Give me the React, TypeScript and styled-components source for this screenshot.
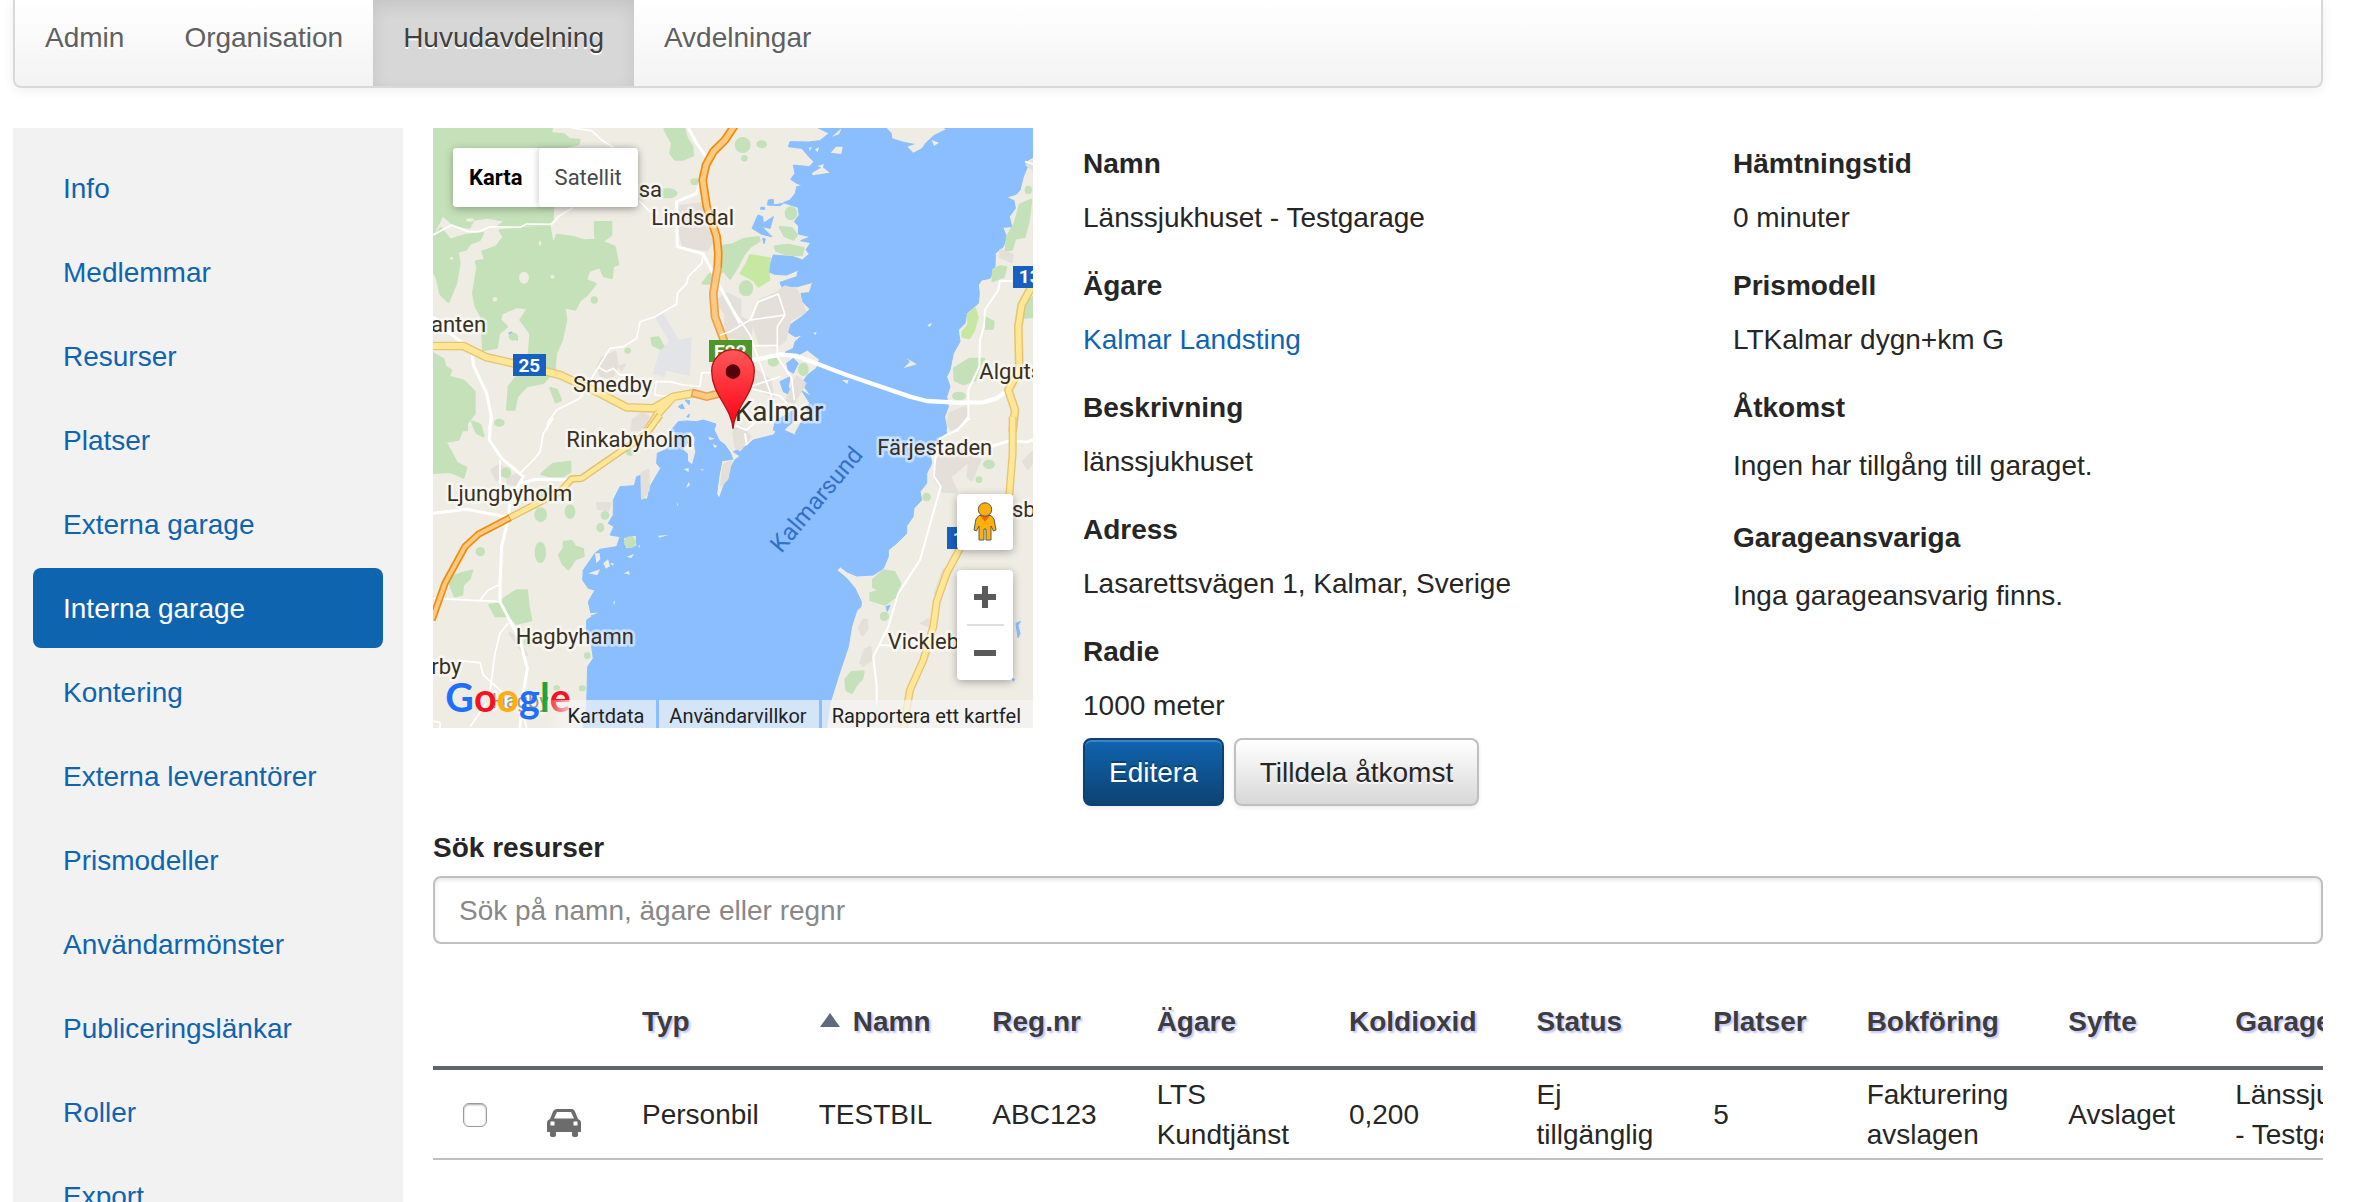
import React from 'react';
import styled, { createGlobalStyle } from 'styled-components';

const GlobalStyle = createGlobalStyle`
  *, *::before, *::after { box-sizing: border-box; }
  body {
    margin: 0;
    background: #fff;
    color: #262626;
    font-family: "Helvetica Neue", Helvetica, "Liberation Sans", Arial, sans-serif;
    font-size: 28px;
    line-height: 40px;
  }
`;

const Page = styled.div`
  height: 100vh;
  overflow: hidden;
  padding: 0 43px 0 13px;
`;

/* ---------- top navigation ---------- */

const NavBar = styled.nav`
  display: flex;
  border: 2px solid #d9d9d9;
  border-top: 0;
  border-radius: 0 0 8px 8px;
  background: linear-gradient(#fff, #f3f3f3);
  box-shadow: 0 2px 12px rgba(0, 0, 0, 0.07);
`;

const NavItem = styled.a<{ $active?: boolean }>`
  padding: 18px 30px 28px;
  color: ${p => (p.$active ? '#404040' : '#606060')};
  background: ${p => (p.$active ? '#d7d7d7' : 'transparent')};
  box-shadow: ${p => (p.$active ? 'inset 0 6px 16px rgba(0, 0, 0, 0.09)' : 'none')};
  text-decoration: none;
  text-shadow: 0 2px 0 #fff;
`;

/* ---------- body ---------- */

const Body = styled.div`
  display: flex;
  align-items: flex-start;
  gap: 30px;
  margin-top: 40px;
`;

const Sidebar = styled.nav`
  flex: 0 0 390px;
  display: flex;
  flex-direction: column;
  gap: 4px;
  padding: 20px;
  background: #f2f2f2;
`;

const SideLink = styled.a<{ $active?: boolean }>`
  padding: 21px 30px 19px;
  border-radius: 8px;
  color: ${p => (p.$active ? '#fff' : '#0f64b0')};
  background: ${p => (p.$active ? '#0f64b0' : 'transparent')};
  text-decoration: none;
`;

const Main = styled.main`
  flex: 1;
  min-width: 0;
`;

const Overview = styled.section`
  display: grid;
  grid-template-columns: repeat(3, minmax(0, 1fr));
  column-gap: 60px;
`;

const Details = styled.div`
  padding-top: 16px;
`;

const Facts = styled.dl`
  margin: 0;
  dt { font-weight: bold; margin-bottom: 14px; }
  dd { margin: 0 0 28px; }
  dd:last-child { margin-bottom: 12px; }
`;

const Note = styled.p`
  margin: 0;
  padding: 4px 0;
`;

const Link = styled.a`
  color: #0f64b0;
  text-decoration: none;
`;

const Actions = styled.div`
  display: flex;
  gap: 10px;
`;

const Button = styled.button<{ $primary?: boolean }>`
  padding: 13px 24px 11px;
  border: 2px solid ${p => (p.$primary ? '#0c4273' : '#bfbfbf')};
  border-radius: 8px;
  font: inherit;
  color: ${p => (p.$primary ? '#fff' : '#262626')};
  background: ${p => (p.$primary ? 'linear-gradient(#0f64b0, #0d4373)' : 'linear-gradient(#fff, #d8d8d8)')};
  text-shadow: ${p => (p.$primary ? '0 -2px 0 rgba(0, 0, 0, 0.25)' : '0 2px 0 rgba(255, 255, 255, 0.75)')};
  box-shadow: inset 0 2px 0 rgba(255, 255, 255, 0.2), 0 2px 4px rgba(0, 0, 0, 0.08);
`;

/* ---------- search ---------- */

const SearchLabel = styled.label`
  display: block;
  margin: 22px 0 8px;
  font-weight: bold;
`;

const SearchInput = styled.input`
  display: block;
  width: 100%;
  height: 68px;
  padding: 2px 24px 0;
  border: 2px solid #c0c0c0;
  border-radius: 8px;
  font: inherit;
  color: #262626;
  background: #fff;
  box-shadow: inset 0 2px 4px rgba(0, 0, 0, 0.1);
  &::placeholder { color: #888; opacity: 1; }
`;

/* ---------- table ---------- */

const TableWrap = styled.div`
  margin-top: 32px;
  overflow: hidden;
`;

const Table = styled.table`
  width: 100%;
  border-collapse: collapse;
  text-align: left;
`;

const HeadCell = styled.th`
  padding: 26px 30px 24px;
  border-bottom: 4px solid #5f636b;
  color: #3d3d3d;
  text-shadow: 2px 2px 2px #c4c4ff;
`;

const Cell = styled.td`
  padding: 5px 30px 3px;
  border-bottom: 2px solid #c0c0c0;
  vertical-align: middle;
`;

const SortHeading = styled.span`
  display: flex;
  align-items: center;
  gap: 12px;
`;

const SortArrow = styled.svg`
  flex: none;
  width: 22px;
  height: 16px;
  margin-bottom: 4px;
`;

const Tick = styled.input`
  appearance: none;
  display: block;
  width: 24px;
  height: 24px;
  margin: 0;
  border: 1px solid #9a9a9a;
  border-radius: 6px;
  background: #fff;
  box-shadow: inset 0 1px 2px rgba(0, 0, 0, 0.35);
`;

const CarPicture = styled.svg`
  display: block;
  width: 35px;
  height: 28px;
  margin-top: 15px;
`;

/* ---------- map ---------- */

const MapBox = styled.div`
  position: relative;
  width: 600px;
  height: 600px;
  overflow: hidden;
  background: #eeece3;
  font-family: Roboto, sans-serif;
`;

const MapDrawing = styled.svg`
  display: block;
  width: 100%;
  height: 100%;
`;

const Water = styled.path`fill: #8abeff; stroke: #8abeff; stroke-width: 3; stroke-linejoin: round;`;
const Ground = styled.path`fill: #eeece3;`;
const Wood = styled.path`fill: #c5e1b9; stroke: #c5e1b9; stroke-width: 8; stroke-linejoin: round;`;
const Park = styled.path`fill: #c7e8a2; stroke: #c7e8a2; stroke-width: 6; stroke-linejoin: round;`;
const Town = styled.path`fill: #e4dfd8; stroke: #e4dfd8; stroke-width: 8; stroke-linejoin: round;`;
const Airfield = styled.path`fill: #e3e4e7;`;
const Road = styled.path<{ $w?: number; $c?: string }>`
  fill: none;
  stroke: ${p => p.$c ?? '#fff'};
  stroke-width: ${p => p.$w ?? 5};
  stroke-linejoin: round;
  stroke-linecap: butt;
`;
const PlaceName = styled.text<{ $size?: number; $c?: string; $halo?: string }>`
  font-family: Roboto, sans-serif;
  font-size: ${p => p.$size ?? 66}px;
  fill: ${p => p.$c ?? '#382f1f'};
  stroke: ${p => p.$halo ?? 'rgba(255, 255, 255, 0.5)'};
  stroke-width: 16;
  stroke-linejoin: round;
  paint-order: stroke;
`;
const ShieldText = styled.text`
  font-family: Roboto, sans-serif;
  font-size: 57px;
  font-weight: 700;
  fill: #fff;
  text-anchor: middle;
`;
const LogoText = styled.text`
  font-family: Lato, sans-serif;
  font-size: 118px;
  font-weight: 700;
`;

const MapTypes = styled.div`
  position: absolute;
  left: 20px;
  top: 20px;
  display: flex;
  border-radius: 4px;
  background: #fff;
  box-shadow: 0 2px 8px rgba(0, 0, 0, 0.3);
`;

const MapType = styled.button<{ $active?: boolean }>`
  height: 59px;
  padding: 0 16px;
  border: 0;
  border-radius: 4px;
  background: #fff;
  box-shadow: ${p => (p.$active ? 'none' : '-2px 0 6px rgba(0, 0, 0, 0.15)')};
  font-family: Roboto, sans-serif;
  font-size: 22px;
  font-weight: ${p => (p.$active ? 700 : 400)};
  color: ${p => (p.$active ? '#000' : '#484848')};
`;

const MapTools = styled.div`
  position: absolute;
  right: 20px;
  bottom: 48px;
  display: flex;
  flex-direction: column;
  gap: 20px;
`;

const ToolCard = styled.div`
  display: flex;
  flex-direction: column;
  align-items: center;
  width: 56px;
  border-radius: 4px;
  background: #fff;
  box-shadow: 0 2px 8px rgba(0, 0, 0, 0.3);
`;

const ToolButton = styled.button<{ $h: number }>`
  display: flex;
  align-items: center;
  justify-content: center;
  width: 56px;
  height: ${p => p.$h}px;
  padding: 0;
  border: 0;
  background: none;
`;

const ToolRule = styled.hr`
  width: 37px;
  margin: 0;
  border: 0;
  border-top: 2px solid #dedede;
`;

const Attribution = styled.div`
  position: absolute;
  right: 0;
  bottom: 0;
  display: flex;
  gap: 3px;
`;

const Credit = styled.a<{ $fade?: boolean }>`
  padding: 0 12px 0 ${p => (p.$fade ? 24 : 10)}px;
  height: 28px;
  background: ${p => (p.$fade ? 'linear-gradient(90deg, transparent, rgba(245, 245, 245, 0.7) 24px)' : 'rgba(245, 245, 245, 0.7)')};
  color: #222;
  font-size: 20px;
  line-height: 32px;
  text-decoration: none;
  white-space: nowrap;
`;

const dot = (cx: number, cy: number, rx: number, ry: number = rx) =>
  `M${cx - rx} ${cy}a${rx} ${ry} 0 1 0 ${2 * rx} 0a${rx} ${ry} 0 1 0 ${-2 * rx} 0z`;

const NW = 'translate(-39 -24)';
const NE = 'translate(891 -24)';
const SW = 'translate(-39 876)';
const SE = 'translate(891 876)';

function MapTerrain() {
  return (
    <>
      <g transform={NE}>
        <Water d="M265 24L297 40 270 62 235 66 180 65 175 80 215 85 235 108 252 125 238 140 190 135 195 160 182 178 200 190 218 196 200 200 196 220 180 240 160 248 204 262 208 285 193 305 206 318 205 342 242 350 212 362 242 368 228 390 238 402 217 420 190 410 130 405 118 440 115 455 135 463 170 465 205 450 200 470 150 487 155 500 202 500 248 487 238 518 213 520 218 545 240 568 215 590 180 615 172 635 195 650 218 645 195 665 190 685 165 697 205 705 232 690 268 718 262 740 235 762 215 790 245 830 215 812 240 850 225 862 240 885 215 905 195 940 650 940 640 900 655 860 650 830 660 800 650 770 660 750 670 700 690 665 685 630 705 610 710 580 745 550 748 520 745 495 755 480 780 475 795 440 796 400 820 380 830 350 818 322 845 320 838 290 856 265 852 242 830 232 860 222 870 210 880 170 895 135 887 125 909 112V24z" />
        <Water d="M66 325L84 285 98 290 100 310 130 290 120 325 96 320 126 350 95 343zM115 240L130 238 130 255 160 250 150 257 112 255zM92 262h12v6h-12zM98 355l8 2-4 14zM170 730L190 715 205 730 190 760 175 750zM150 785L180 770 175 800 190 830 160 815zM135 905L190 870 195 900 150 940 130 930z" />
        <Ground d="M470 24L485 40 487 55 520 65 555 72 532 80 550 98 575 85 587 68 612 45 648 28 640 24zM305 50l30-25-8 18zM318 80h20l-4 22-32-4zM255 88l12-6-4 15zM245 160l32-20 22 18-50 8zM262 138l20-6-4 12zM605 60l22 8-15 10zM592 615l15-7-8 13zM520 745l20-20-10-10 30 18zM336 780h20l-4 12zM250 638l10-2-4 10zM202 740l30-25 30 5-5 25-30 22-22-5zM205 770l18 18-12 4zM238 82l8 0-8 12z" />
        <Town d="M90 540L140 520 165 500 200 510 215 550 225 575 180 600 165 660 140 680 90 675 70 610zM-15 560L30 590 65 610 60 660-10 650zM170 840L200 770 225 790 190 850zM60 740L120 780 130 830 70 800zM812 390l35 15-2 20-35-15zM660 880l50-20 5 40-50 30-12-20zM890 135l19-12v25z" />
        <Wood d={dot(38, 75, 20) + dot(95, 73, 12, 8) + dot(43, 115, 6) + dot(183, 280, 15, 17) + dot(48, 505, 18, 20) + dot(130, 725, 13, 11) + dot(220, 748, 12, 16) + dot(895, 210, 7, 9) + dot(687, 828, 17, 9) + 'M150 322L185 325 200 345 190 358 165 348zM135 380L175 375 220 385 215 405 170 403 140 392zM-30 392L0 378 40 358 85 352 88 362 60 380 40 405 22 440 0 475-20 450-50 480-45 455-25 440zM870 255L903 240 895 305 883 350 855 355 845 388 828 390 832 350 855 310zM790 450L810 440 828 442 820 470 788 482zM764 592L790 605 788 625 765 625zM673 745L720 717 762 717 745 750 735 780 700 792 675 780zM884 592L909 590V532L890 550z'} />
        <Park d="M60 405L120 415 115 450 118 480 85 500 70 480 32 460 50 430zM735 565L743 592 733 630 718 655 697 650 697 635 715 615 713 585z" />
      </g>

      <g transform={SE}>
        <Water d="M-60 250L-32 235-20 200 0 150 15 120 30 108 10 95 50 78 70 60 130 45 158 8 165 32 195 45 215 35 238 5 240-20 642-20 650 25 640 50 600 100 605 130 590 160 590 190 570 215 575 240 552 265 549 290 530 318 530 340 500 370 475 390 475 410 460 445 430 465 380 468 350 455 332 441 320 450 350 475 375 505 394 545 393 560 380 572 365 620 355 680 325 770 300 850 290 924H-60z" />
        <Water d="M468 560l12-4-8 18zM858 610l14-6-8 12 6 25-6 12zM846 774l8 4-4 6z" />
        <Town d="M625 115L690 90 720 120 660 170 680 215 640 215 610 170zM720 110l30 10-25 60-12-10zM880 125l29-30v30l-15 20zM640 450l15-10-30 90-10-10zM400 600l10 0 2 25-15 20-10-20zM405 690l15-8 5 35-25 20-8-10zM575 610l20-12v20z" />
        <Wood d={dot(777, 133, 14, 10) + dot(747, 179, 6) + dot(590, 231, 9) + dot(463, 589, 10) + 'M430 480L460 452 493 457 510 490 498 528 465 553 422 540 422 520 450 513 430 500zM347 778L365 757 400 755 396 775 378 795 365 818 350 810z'} />
      </g>

      <g transform={SW}>
        <Water d="M488 924L500 860 503 740 520 715 515 680 500 640 500 600 515 590 505 545 525 510 505 505 488 480 490 450 525 400 540 388 590 380 600 350 570 345 582 320 565 310 580 285 580 240 600 200 643 197 650 170 665 165 662 235 682 238 690 200 722 145 710 130 712 100 740 88 755 55 785 10 800 20 825 5 860 8 880 25 898 62 915 75 932 100 938 118 906 122 897 168 890 222 898 236 912 215 928 150 945 120 965 115V924z" />
        <Ground d="M800 45l12-10 12 20-2 20 4 20-10 38-12-10 0-22-14-12 14-20zM840 148h10v4zM792 148l14-4v12zM798 205l8-20 4 10zM770 245l5 10-2 4zM865 50l20 6-16 4zM878 72l14 6-8 6zM505 460l35-12-8 18zM550 430l14-12 6 20-12 8zM525 400l14 0 2 18-12 12zM612 460l14-8 4 12zM715 347l30-2-28 8zM620 410l22-8-8 12zM580 548l4-8 0 14zM505 580l30-2-20 8zM612 355l35-8 2 30-30 8zM655 375l5 2-2 8zM570 430l10 0 0 8z" />
        <Town d="M215 150l25-15 15 20-25 25zM262 175l30-12 20 20-18 14-30-8zM665 160l20-10 0 60-18 25zM532 250l38 0-6 20-30-4zM270 640l25 15 25 50-20-20zM912 135l20-10-10 50-18 20zM940 30l25-10 25 30-30 40-14-10z" />
        <Wood d={'M39-20L100-10 128 0 130 20 115 58 75 65 95 100 110 130 138 143 130 172 110 163 90 155 39 158zM157 5L180 15 190 48 170 38zM365 162L400 132 450 126 450 155 430 168 390 168zM418 405L432 385 432 366 455 364 465 380 488 387 490 408 465 417 445 447 428 430zM89 490L97 472 120 462 156 452 148 475 128 495 126 523 105 528zM254 535L290 512 320 512 325 560 333 600 290 610 270 588 227 588 209 555 242 550z' + dot(238, 8, 12, 8) + dot(258, 158, 12) + dot(362, 284, 15, 18) + dot(450, 275, 12, 18) + dot(555, 286, 9) + dot(541, 323, 8, 10) + dot(361, 397, 13, 28) + dot(181, 395, 10) + dot(502, 707, 6) + dot(487, 805, 7, 5) + dot(630, 367, 14) + dot(380, 225, 25, 18) + dot(410, 803, 6, 4) + dot(630, 95, 8) + dot(325, 665, 10, 12)} />
      </g>

      <g transform={NW}>
        <Water d="M750 935L775 905 800 903 830 905 850 900 888 912 880 935zM266 640l8-4 14 12 4 12-10-4zM775 860l12-8 6 14-10 0zM795 840l14 2-2 12zM800 890l8-8-2 10z" />
        <Town d="M775 260L850 250 860 290 890 350 860 390 790 380 778 330zM545 715l40-18 8 40-20 40-30-10-10-25zM890 545l30-25 40 20v60l-45-20zM640 900l25-20 20 10-20 40h-30zM600 740l14-6-10 15z" />
        <Airfield d="M705 590l25-12 45 82 40-8-5 115-72-15-5 20-35-10 25-80 25-15z" />
        <Wood d={'M39 24H345L395 24 392 40 432 44 448 58 478 60 474 72 440 80 420 90 398 262 398 298 385 310 235 320 258 302 205 292 160 298 148 322 102 314 65 282 62 296 39 340zM39 352L62 325 90 360 140 345 188 340 178 360 150 370 138 388 112 395 118 430 108 488 85 545 62 522 50 470 39 455zM240 332L310 325 388 318 398 378 412 345 460 352 495 362 527 360 525 307 573 307 573 345 545 365 583 380 594 433 578 438 575 473 552 468 540 440 507 452 497 480 526 492 500 525 480 540 465 568 432 560 438 600 425 660 407 700 403 750 370 788 320 798 290 830 283 868 262 868 267 800 297 760 325 730 332 640 302 600 325 565 290 560 245 580 240 600 260 620 236 640 230 682 190 690 185 590 168 560 160 520 173 440 168 425 197 420 188 395 230 380 252 350zM734 28L793 26 798 50 816 80 818 106 790 118 765 118 752 100 757 70zM39 700L70 718 75 740 93 752 85 770 130 782 163 815 163 880 140 910V930H39zM695 655l20-2 14 26-8 6-22-10zM392 805l18 5 12 30-14 6zM905 378L960 372V410L920 460 900 440zM848 490L870 462 880 490z' + dot(523, 540, 7) + dot(824, 185, 9, 6) + dot(742, 220, 26, 11) + dot(623, 692, 6, 5) + dot(280, 650, 10, 8)} />
        <Ground d={dot(312, 473, 15, 18) + dot(225, 538, 7) + dot(398, 470, 6) + dot(150, 300, 12, 5) + dot(95, 415, 5) + dot(360, 370, 4, 8)} />
      </g>
    </>
  );
}

function MapRoads() {
  return (
    <>
      <g transform={NW}>
        <Road d="M39 345L95 315 145 335 175 335 210 320 300 322 320 312 395 313 415 290 460 262M455 24L515 32 545 60 580 82M655 240L690 275 715 280M850 400L845 430 805 470 800 490 772 520 770 552 705 590 660 605 650 655 610 680 570 685 535 742 500 800 480 835 410 870 385 905 380 930M535 742L560 755 580 745 600 765 635 765M708 785L750 785 790 795 840 800 845 758 880 758M708 785L705 825 750 830" />
        <Road $w={9} d="M805 24L830 70 862 115 830 220 770 245 772 380 850 402 900 500 960 610M39 590L90 640 155 690 160 735 200 820 215 895 207 930" />
        <Road $w={26} $c="#e6c46f" d="M39 678L130 678 200 712 280 730 420 765 540 820 620 862 700 865 760 830 820 820M760 830L715 880 680 935" />
        <Road $w={18} $c="#ffe796" d="M39 678L130 678 200 712 280 730 420 765 540 820 620 862 700 865 760 830 820 820M760 830L715 880 680 935" />
        <Road $w={26} $c="#f08a0c" d="M945 15L915 60 880 95 858 135 848 180 860 260 890 350 895 400 893 445" />
        <Road $w={26} $c="#e9a14e" d="M893 440L880 520 885 590 915 670M815 818L860 830 900 820" />
        <Road $w={16} $c="#ffca80" d="M945 15L915 60 880 95 858 135 848 180 860 260 890 350 895 400 893 445 880 520 885 590 915 670M819 819L860 830 900 820" />
      </g>
      <g transform={NE}>
        <Road $w={13} d="M65 722L150 703 200 708 350 765 540 830 590 843 680 848 760 847 800 835 832 812" />
        <Road d="M-30 645L0 635 60 600 85 545 145 522 165 585 142 620 142 710 185 775 193 840M60 600L165 585M0 555L60 645 125 830M60 800L150 770M60 805L150 828 190 870M70 677H145" />
        <Road $w={6} d="M848 484L810 482 805 510 765 570 762 620 750 660 748 740 715 810 715 890 680 935" />
        <Road $w={6} d="M885 125L909 132" />
        <Road $w={26} $c="#e6c46f" d="M905 500L875 555 865 620 868 750 835 810 855 870 848 935" />
        <Road $w={17} $c="#ffe796" d="M905 500L875 555 865 620 868 750 835 810 855 870 848 935" />
      </g>
      <g transform={SE}>
        <Road $w={6} d="M720-5L680 30 630 55 615 120 612 170 632 200 570 420 505 520 475 620 430 710 440 800 440 860M450 675L500 678M0 10L50 30 90-5M45 40L50 75" />
        <Road $w={9} d="M780 80L840 62 890 66 909 60" />
        <Road $w={24} $c="#e6c46f" d="M848-10L848 100 838 225M690 385L650 460 620 545 610 620 580 720 540 810 520 924" />
        <Road $w={16} $c="#ffe796" d="M848-10L848 100 838 225M690 385L650 460 620 545 610 620 580 720 540 810 520 924" />
      </g>
      <g transform={SW}>
        <Road d="M400-5L370 40 360 95 340 120 300 160M240 120L240 190M39 535L240 545M235 495L205 510 180 540M265 610L240 640 225 700 210 815M115 722L180 728 190 765 245 815M39 903L60 908 60 924M200 850L150 920M300 845L320 924" />
        <Road $w={9} d="M213-10L208 60 245 115 310 170 270 240 265 295 245 380 240 490 240 545 300 660 322 745 305 850 300 924M39 280L140 268 265 292M300 190L350 178 450 180M560 115L600 85 650 45 715 10" />
        <Road $w={22} $c="#e0bf6c" d="M720-15L680 40 485 175 455 177 420 215 265 295" />
        <Road $w={14} $c="#ffe796" d="M720-15L680 40 485 175 455 177 420 215 265 295" />
        <Road $w={22} $c="#f08a0c" d="M270 293L175 343 135 380 75 490 36 600" />
        <Road $w={12} $c="#ffca80" d="M268 294L175 343 135 380 75 490 36 600" />
      </g>
    </>
  );
}

function MapLabels() {
  return (
    <>
      <g transform={NW}>
        <PlaceName x="656" y="232">sa</PlaceName>
        <PlaceName x="694" y="316">Lindsdal</PlaceName>
        <PlaceName x="33" y="636">anten</PlaceName>
        <PlaceName x="459" y="816">Smedby</PlaceName>
        <rect x="279" y="702" width="99" height="66" fill="#1760c0" />
        <ShieldText x="328" y="755">25</ShieldText>
        <rect x="867" y="660" width="129" height="66" fill="#4d9629" />
        <ShieldText x="931" y="714">E22</ShieldText>
      </g>
      <g transform={NE}>
        <PlaceName x="14" y="902" $size={84}>Kalmar</PlaceName>
        <PlaceName x="748" y="776">Alguts</PlaceName>
        <rect x="849" y="438" width="99" height="66" fill="#1760c0" />
        <ShieldText x="899" y="490">13</ShieldText>
      </g>
      <g transform={SW}>
        <PlaceName x="439" y="80">Rinkabyholm</PlaceName>
        <PlaceName x="80" y="243">Ljungbyholm</PlaceName>
        <PlaceName x="287" y="672">Hagbyhamn</PlaceName>
        <PlaceName x="34" y="762">rby</PlaceName>
        <PlaceName x="215" y="864" $size={60} $c="#9b968c">Hagby</PlaceName>
        <LogoText x="76" y="876">
          <tspan fill="#1f6fff">G</tspan>
          <tspan fill="#f5121e">o</tspan>
          <tspan fill="#ffae10">o</tspan>
          <tspan fill="#1f6fff">g</tspan>
          <tspan fill="#1ca53c">l</tspan>
          <tspan fill="#f5121e">e</tspan>
        </LogoText>
      </g>
      <g transform={SE}>
        <PlaceName x="442" y="104">Färjestaden</PlaceName>
        <PlaceName x="473" y="686">Vickleby</PlaceName>
        <PlaceName x="846" y="291">sby</PlaceName>
        <rect x="651" y="321" width="99" height="66" fill="#1760c0" />
        <ShieldText x="701" y="374">13</ShieldText>
        <PlaceName transform="translate(154 402) rotate(-50)" $size={72} $c="#3470c8" $halo="none">Kalmarsund</PlaceName>
      </g>
      <g transform={NW}>
        <path
          d="M939 926C934 860 875 825 875 753A64 64 0 0 1 1003 753C1003 825 944 860 939 926z"
          fill="url(#pin)"
          stroke="#b0151d"
          strokeWidth="4"
        />
        <circle cx="939" cy="755" r="22" fill="#56000b" />
      </g>
    </>
  );
}

function GarageMap() {
  return (
    <MapBox>
      <MapDrawing viewBox="0 0 1800 1800" role="img" aria-label="Kalmar">
        <defs>
          <linearGradient id="pin" x1="0" y1="0" x2="0" y2="1">
            <stop offset="0" stopColor="#ff5757" />
            <stop offset="1" stopColor="#fb0013" />
          </linearGradient>
        </defs>
        <MapTerrain />
        <MapRoads />
        <MapLabels />
      </MapDrawing>
      <MapTypes>
        <MapType $active>Karta</MapType>
        <MapType>Satellit</MapType>
      </MapTypes>
      <MapTools>
        <ToolCard>
          <ToolButton $h={56} aria-label="Street View">
            <svg width="24" height="40" viewBox="0 0 24 40">
              <path d="M6 13.500H18L21 17 23 28 20.500 29 18 24V38H13V27H11V38H6V24L3.500 29 1 28 3 17z" fill="#fdb00c" stroke="#5b5b50" strokeLinejoin="round" />
              <path d="M7.500 14H16.500L12 20z" fill="#f0670f" />
              <circle cx="12" cy="7.500" r="6.700" fill="#fdb00c" stroke="#5b5b50" />
            </svg>
          </ToolButton>
        </ToolCard>
        <ToolCard>
          <ToolButton $h={54} aria-label="Zooma in">
            <svg width="22" height="22" viewBox="0 0 22 22">
              <path d="M8 0h6v8h8v6h-8v8h-6v-8h-8v-6h8z" fill="#5a5a5a" />
            </svg>
          </ToolButton>
          <ToolRule />
          <ToolButton $h={54} aria-label="Zooma ut">
            <svg width="22" height="22" viewBox="0 0 22 22">
              <path d="M0 8h22v6h-22z" fill="#5a5a5a" />
            </svg>
          </ToolButton>
        </ToolCard>
      </MapTools>
      <Attribution>
        <Credit href="#" $fade>Kartdata</Credit>
        <Credit href="#">Användarvillkor</Credit>
        <Credit href="#">Rapportera ett kartfel</Credit>
      </Attribution>
    </MapBox>
  );
}

function CarIcon() {
  return (
    <CarPicture viewBox="0 0 35 28" role="img" aria-label="Bil">
      <path
        fillRule="evenodd"
        fill="#6c6c6c"
        d="M10 0H25Q27 0 28 2.500L31 10Q34 11 34 14V23H31V26Q31 28 28 28T25 26V23H9V26Q9 28 6 28T3 26V23H0V14Q0 11 3 10L6 2.500Q7 0 10 0zM10 3L7 9.500H27L24 3zM3.500 12.500V16.500H7.500V12.500zM26.500 12.500V16.500H30.500V12.500z"
      />
    </CarPicture>
  );
}

const navItems = ['Admin', 'Organisation', 'Huvudavdelning', 'Avdelningar'];
const sideItems = [
  'Info', 'Medlemmar', 'Resurser', 'Platser', 'Externa garage', 'Interna garage', 'Kontering',
  'Externa leverantörer', 'Prismodeller', 'Användarmönster', 'Publiceringslänkar', 'Roller', 'Export',
];
const headings = ['Reg.nr', 'Ägare', 'Koldioxid', 'Status', 'Platser', 'Bokföring', 'Syfte', 'Garage'];
const resource = [
  'Personbil', 'TESTBIL', 'ABC123', 'LTS Kundtjänst', '0,200', 'Ej tillgänglig', '5',
  'Fakturering avslagen', 'Avslaget', 'Länssjukhuset - Testgarage',
];

export default function App() {
  return (
    <Page>
      <GlobalStyle />
      <NavBar>
        {navItems.map(name => (
          <NavItem key={name} href="#" $active={name === 'Huvudavdelning'}>{name}</NavItem>
        ))}
      </NavBar>
      <Body>
        <Sidebar>
          {sideItems.map(name => (
            <SideLink key={name} href="#" $active={name === 'Interna garage'}>{name}</SideLink>
          ))}
        </Sidebar>
        <Main>
          <Overview>
            <GarageMap />
            <Details>
              <Facts>
                <dt>Namn</dt>
                <dd>Länssjukhuset - Testgarage</dd>
                <dt>Ägare</dt>
                <dd><Link href="#">Kalmar Landsting</Link></dd>
                <dt>Beskrivning</dt>
                <dd>länssjukhuset</dd>
                <dt>Adress</dt>
                <dd>Lasarettsvägen 1, Kalmar, Sverige</dd>
                <dt>Radie</dt>
                <dd>1000 meter</dd>
              </Facts>
              <Actions>
                <Button $primary>Editera</Button>
                <Button>Tilldela åtkomst</Button>
              </Actions>
            </Details>
            <Details>
              <Facts>
                <dt>Hämtningstid</dt>
                <dd>0 minuter</dd>
                <dt>Prismodell</dt>
                <dd>LTKalmar dygn+km G</dd>
                <dt>Åtkomst</dt>
                <dd><Note>Ingen har tillgång till garaget.</Note></dd>
                <dt>Garageansvariga</dt>
                <dd><Note>Inga garageansvarig finns.</Note></dd>
              </Facts>
            </Details>
          </Overview>
          <SearchLabel htmlFor="resource-search">Sök resurser</SearchLabel>
          <SearchInput id="resource-search" type="text" placeholder="Sök på namn, ägare eller regnr" />
          <TableWrap>
            <Table>
              <thead>
                <tr>
                  <HeadCell />
                  <HeadCell />
                  <HeadCell>Typ</HeadCell>
                  <HeadCell>
                    <SortHeading>
                      <SortArrow viewBox="0 0 22 16"><path d="M11 1L21 15H1z" fill="#5f6a7d" /></SortArrow>
                      Namn
                    </SortHeading>
                  </HeadCell>
                  {headings.map(name => <HeadCell key={name}>{name}</HeadCell>)}
                </tr>
              </thead>
              <tbody>
                <tr>
                  <Cell><Tick type="checkbox" aria-label="Välj TESTBIL" /></Cell>
                  <Cell><CarIcon /></Cell>
                  {resource.map(value => <Cell key={value}>{value}</Cell>)}
                </tr>
              </tbody>
            </Table>
          </TableWrap>
        </Main>
      </Body>
    </Page>
  );
}
